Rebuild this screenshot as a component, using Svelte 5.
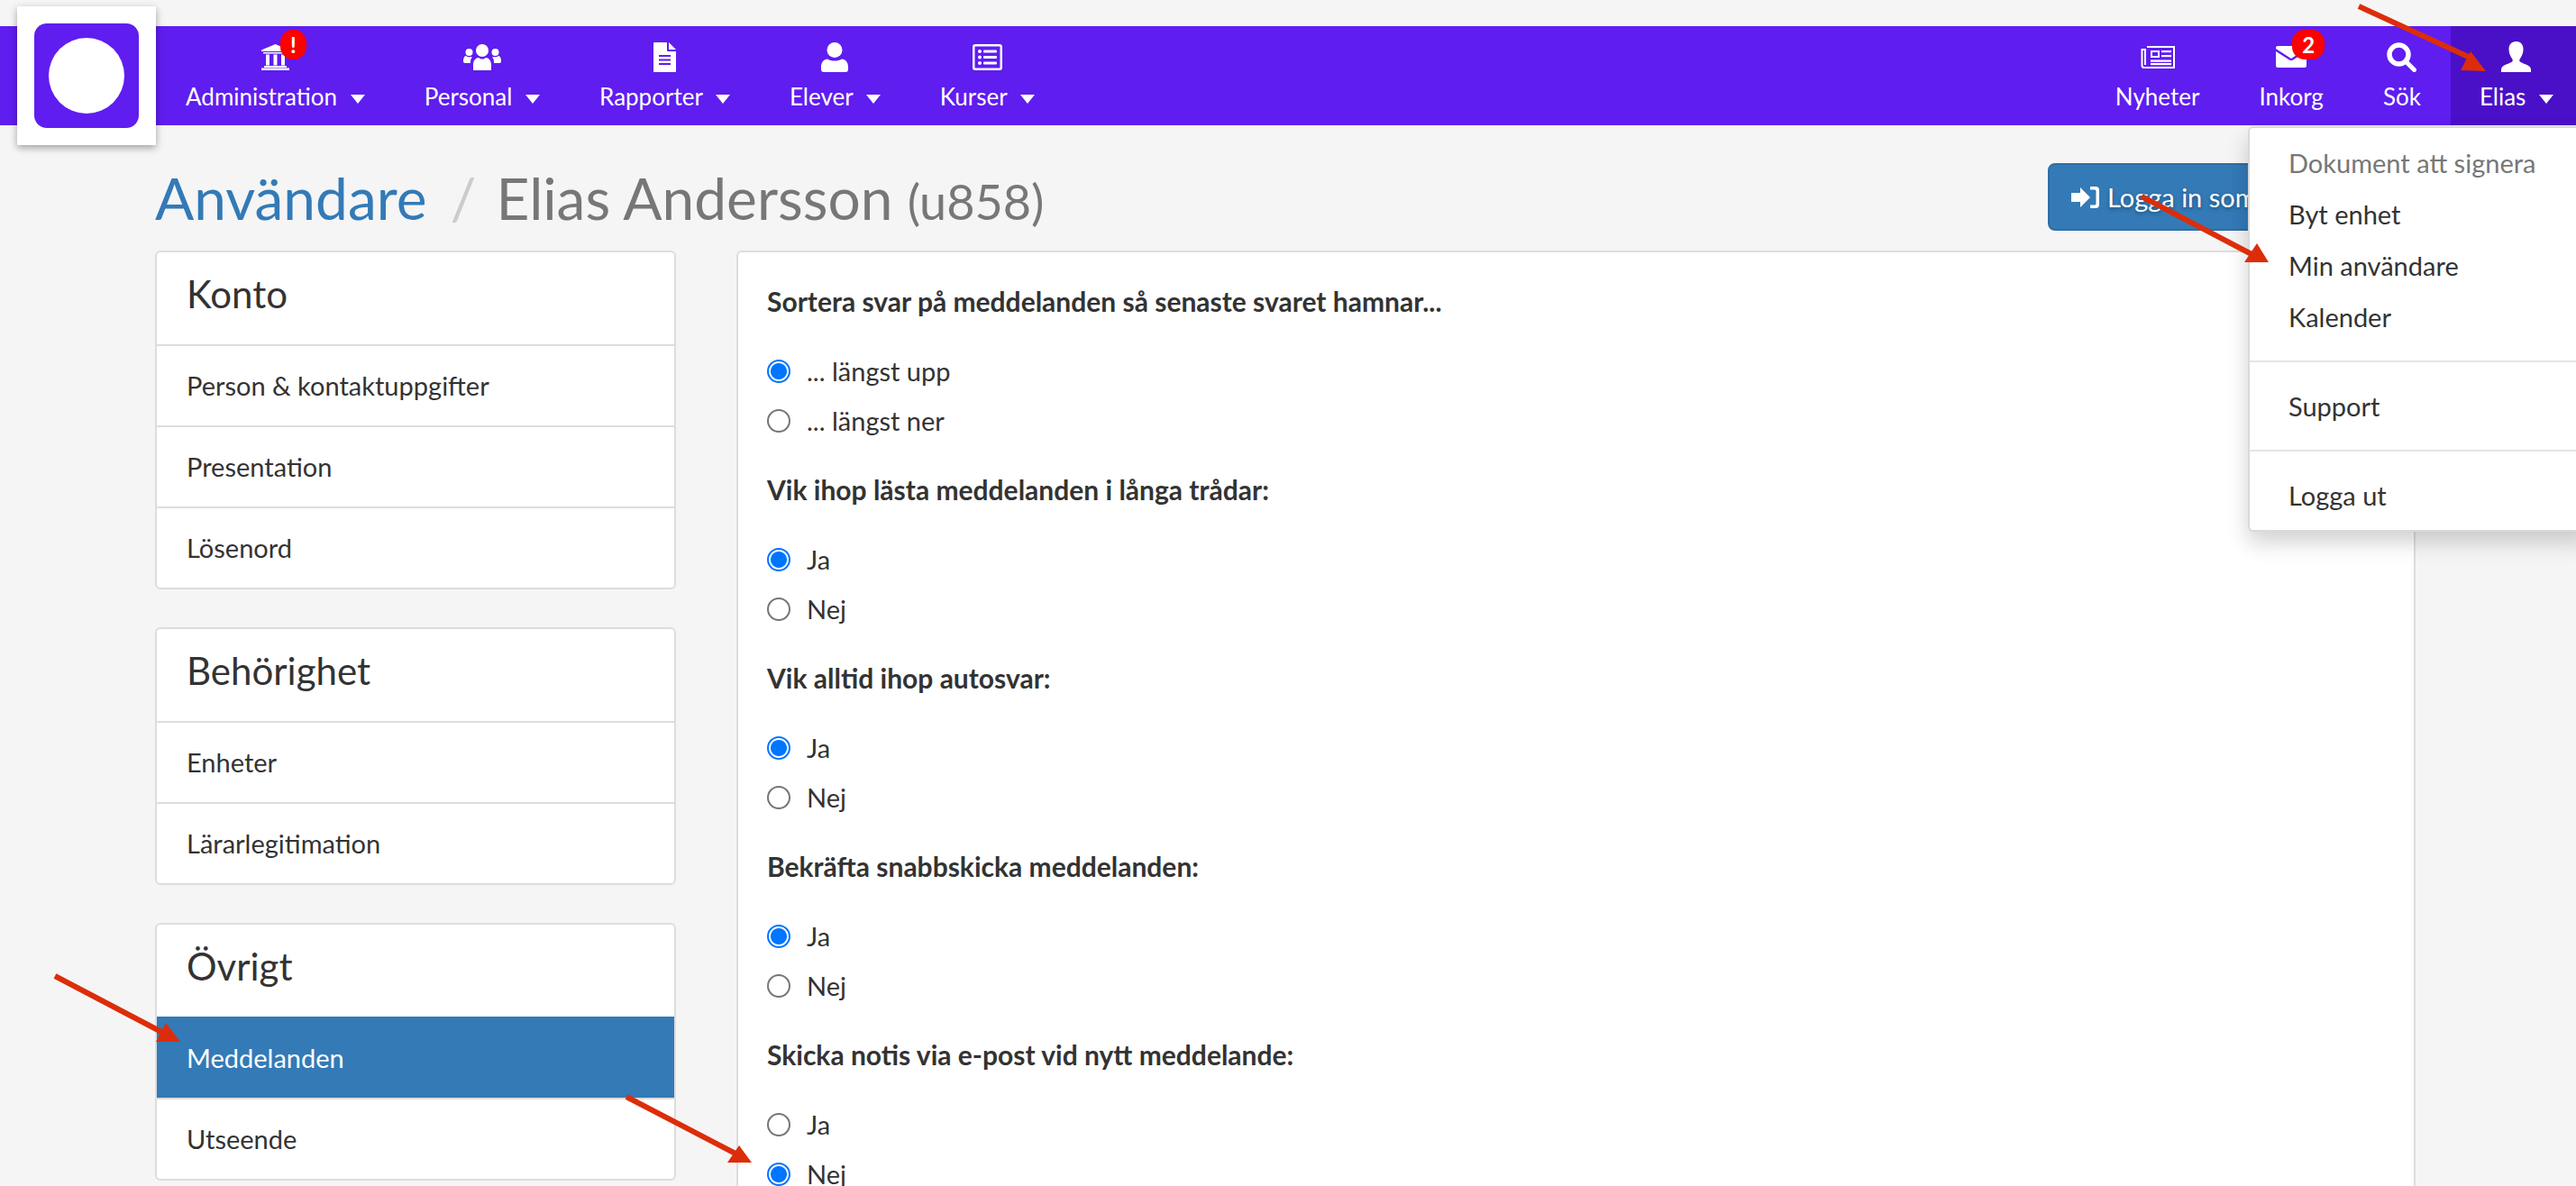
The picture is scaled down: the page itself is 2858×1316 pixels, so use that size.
<script>
	const leftNav = [
		{ label: 'Administration', icon: 'bank', badge: '!' },
		{ label: 'Personal', icon: 'users' },
		{ label: 'Rapporter', icon: 'file' },
		{ label: 'Elever', icon: 'user' },
		{ label: 'Kurser', icon: 'list' }
	];
	const rightNav = [
		{ label: 'Nyheter', icon: 'news' },
		{ label: 'Inkorg', icon: 'mail', badge: '2' },
		{ label: 'Sök', icon: 'search' }
	];
	const sideGroups = [
		{ title: 'Konto', items: ['Person & kontaktuppgifter', 'Presentation', 'Lösenord'] },
		{ title: 'Behörighet', items: ['Enheter', 'Lärarlegitimation'] },
		{ title: 'Övrigt', items: ['Meddelanden', 'Utseende'], active: 'Meddelanden' }
	];
	const questions = [
		{ label: 'Sortera svar på meddelanden så senaste svaret hamnar...', options: ['... längst upp', '... längst ner'], picked: 0 },
		{ label: 'Vik ihop lästa meddelanden i långa trådar:', options: ['Ja', 'Nej'], picked: 0 },
		{ label: 'Vik alltid ihop autosvar:', options: ['Ja', 'Nej'], picked: 0 },
		{ label: 'Bekräfta snabbskicka meddelanden:', options: ['Ja', 'Nej'], picked: 0 },
		{ label: 'Skicka notis via e-post vid nytt meddelande:', options: ['Ja', 'Nej'], picked: 1 }
	];
	const arrows = [
		{ line: '2617,7 2745,66', head: '2741,57 2730,78 2758,79' },
		{ line: '2376,218 2498,282', head: '2504,270 2490,291 2517,291' },
		{ line: '61,1083 181,1146', head: '184,1135 173,1156 200,1156' },
		{ line: '695,1217 816,1280', head: '820,1271 807,1290 834,1290' }
	];
</script>

{#snippet icon(name)}
	{#if name === 'bank'}
		<svg class="ico" width="31" height="29" viewBox="0 0 31 29" fill="#fff">
			<path d="M15.5 0 31 6.500V8H0V6.500Z" />
			<path d="M2 9h27v1.500H2zM5 11.500h4v12H5zM13.500 11.500h4v12h-4zM22 11.500h4v12h-4zM3 24h25v2H3zM0 26.500h31V29H0z" />
		</svg>
	{:else if name === 'users'}
		<svg class="ico" width="42" height="29" viewBox="0 0 42 29" fill="#fff">
			<circle cx="21" cy="7" r="7" />
			<circle cx="6.500" cy="9" r="4" />
			<circle cx="35.500" cy="9" r="4" />
			<path d="M11 29v-6c0-5 3-8 6-8 1.500 1 2.500 1.500 4 1.500s2.500-.5 4-1.500c3 0 6 3 6 8v6c0 0 0 0-1 0H12c-1 0-1 0-1 0Z" />
			<path d="M9.500 15c-1.500 1.500-1.500 4-1.500 6H2c-1 0-2-.5-2-2 0-3 1-6 3-6 1 .8 2 1.300 3.500 1.300 1.200 0 2-.3 3-.3ZM32.500 15c1.500 1.500 1.500 4 1.500 6h6c1 0 2-.5 2-2 0-3-1-6-3-6-1 .8-2 1.300-3.500 1.300-1.200 0-2-.3-3-.3Z" />
		</svg>
	{:else if name === 'file'}
		<svg class="ico" width="25" height="33" viewBox="0 0 25 33">
			<path fill="#fff" d="M1 0h14v9a1 1 0 0 0 1 1h9v22a1 1 0 0 1-1 1H1a1 1 0 0 1-1-1V1a1 1 0 0 1 1-1Z" />
			<path fill="#fff" d="M17 0l8 8h-8Z" />
			<path fill="none" stroke="#5f1df0" stroke-width="2" d="M6 15h13M6 19.500h13M6 24h13" />
		</svg>
	{:else if name === 'user'}
		<svg class="ico" width="30" height="33" viewBox="0 0 30 33" fill="#fff">
			<circle cx="15" cy="8.500" r="8.500" />
			<path d="M7 18.500c2.500 1.500 5 2 8 2s5.500-.5 8-2c4 0 7 4 7 8.500v3c0 2-1 3-3 3H3c-2 0-3-1-3-3v-3c0-4.500 3-8.500 7-8.500Z" />
		</svg>
	{:else if name === 'list'}
		<svg class="ico" width="33" height="29" viewBox="0 0 33 29">
			<rect x="1.250" y="1.250" width="30.500" height="26.500" rx="2" fill="none" stroke="#fff" stroke-width="2.500" />
			<g fill="#fff">
				<circle cx="8" cy="8" r="2" /><circle cx="8" cy="14.500" r="2" /><circle cx="8" cy="21" r="2" />
				<rect x="12" y="6.500" width="15" height="3" rx="1" /><rect x="12" y="13" width="15" height="3" rx="1" /><rect x="12" y="19.500" width="15" height="3" rx="1" />
			</g>
		</svg>
	{:else if name === 'news'}
		<svg class="ico" width="38" height="25" viewBox="0 0 38 25">
			<path fill="none" stroke="#fff" stroke-width="2" d="M7 1h30v23H4a2.500 2.500 0 0 1-2.500-2.500V4H5v17" />
			<g fill="#fff">
				<path d="M11 5h10v8H11Zm2 2v4h6V7Z" fill-rule="evenodd" />
				<rect x="23" y="5" width="11" height="2.200" /><rect x="23" y="10" width="11" height="2.200" />
				<rect x="11" y="15.500" width="23" height="2.200" /><rect x="11" y="19" width="23" height="2.200" />
			</g>
		</svg>
	{:else if name === 'mail'}
		<svg class="ico" width="34" height="24" viewBox="0 0 34 24" fill="#fff">
			<path d="M0 2a2 2 0 0 1 2-2h30a2 2 0 0 1 2 2v1L17 14 0 3Z" />
			<path d="M0 6l15 9.500c1.300.8 2.700.8 4 0L34 6v16a2 2 0 0 1-2 2H2a2 2 0 0 1-2-2Z" />
		</svg>
	{:else if name === 'search'}
		<svg class="ico" width="33" height="33" viewBox="0 0 33 33" fill="none" stroke="#fff">
			<circle cx="13.500" cy="13.500" r="10.500" stroke-width="5.500" />
			<path d="M21.500 21.500 30.500 30.500" stroke-width="5" stroke-linecap="round" />
		</svg>
	{:else if name === 'glyph'}
		<svg class="ico" width="33" height="34" viewBox="0 0 33 34" fill="#fff">
			<path d="M16.500 0c5 0 8 3.500 8 8.500 0 4-1.500 8-3.500 10.500-.8 1-1 2-.5 3 2 2.500 12.500 4 12.500 9V34H0v-3c0-5 10.500-6.500 12.500-9 .5-1 .3-2-.5-3C10 16.500 8.500 12.500 8.500 8.500c0-5 3-8.500 8-8.500Z" />
		</svg>
	{/if}
{/snippet}

<div class="page">
	<nav class="topbar">
		<div class="nav-group">
			{#each leftNav as item}
				<div class="nav-item">
					<span class="icon-wrap">
						{@render icon(item.icon)}
						{#if item.badge}<span class="badge">{item.badge}</span>{/if}
					</span>
					<span class="nav-label">{item.label} <i class="caret"></i></span>
				</div>
			{/each}
		</div>
		<div class="nav-group">
			{#each rightNav as item}
				<div class="nav-item">
					<span class="icon-wrap">
						{@render icon(item.icon)}
						{#if item.badge}<span class="badge wide">{item.badge}</span>{/if}
					</span>
					<span class="nav-label">{item.label}</span>
				</div>
			{/each}
			<div class="nav-item open">
				<span class="icon-wrap">{@render icon('glyph')}</span>
				<span class="nav-label">Elias <i class="caret"></i></span>
			</div>
		</div>
	</nav>

	<header class="title-row">
		<h1><a href="#users">Användare</a><span class="slash">/</span>Elias Andersson <small>(u858)</small></h1>
		<button class="login-as">
			<svg width="32" height="26" viewBox="0 0 32 26" fill="#fff">
				<path d="M0 8h10V2l11 11-11 11v-6H0Z" />
				<path d="M21 1h6a4 4 0 0 1 4 4v16a4 4 0 0 1-4 4h-6v-3.500h5a1.500 1.500 0 0 0 1.500-1.500V6a1.500 1.500 0 0 0-1.500-1.500h-5Z" />
			</svg>
			Logga in som
		</button>
	</header>

	<div class="columns">
		<aside class="sidebar">
			{#each sideGroups as group}
				<section class="side-panel">
					<h3>{group.title}</h3>
					{#each group.items as entry}
						<div class="side-item" class:active={entry === group.active}>{entry}</div>
					{/each}
				</section>
			{/each}
		</aside>

		<main class="form-panel">
			{#each questions as q}
				<div class="question">
					<div class="q-label">{q.label}</div>
					{#each q.options as opt, j}
						<label class="radio-row">
							<span class="radio" class:checked={q.picked === j}></span>
							{opt}
						</label>
					{/each}
				</div>
			{/each}
		</main>
	</div>

	<div class="logo">
		<div class="logo-mark"><span class="logo-dot"></span></div>
	</div>

	<ul class="user-menu">
		<li class="muted">Dokument att signera</li>
		<li>Byt enhet</li>
		<li>Min användare</li>
		<li>Kalender</li>
		<li class="divider"></li>
		<li>Support</li>
		<li class="divider"></li>
		<li>Logga ut</li>
	</ul>

	<svg class="arrows" width="2858" height="1316" viewBox="0 0 2858 1316">
		{#each arrows as a}
			<polyline points={a.line} fill="none" stroke="#dc2d0a" stroke-width="6" />
			<polygon points={a.head} fill="#dc2d0a" />
		{/each}
	</svg>
</div>

<style>
	:global(body) {
		margin: 0;
		background: #f5f5f5;
	}

	.page {
		position: relative;
		height: 1316px;
		overflow: hidden;
		padding-top: 29px;
		box-sizing: border-box;
		font-family: Lato, 'Noto Sans', sans-serif;
		font-size: 29px;
		color: #333;
		background: #f5f5f5;
	}

	.topbar {
		display: flex;
		justify-content: space-between;
		height: 110px;
		padding-left: 173px;
		background: #5f1df0;
		color: #fff;
		font-size: 26px;
	}

	.nav-group {
		display: flex;
	}

	.nav-item {
		display: flex;
		flex-direction: column;
		align-items: center;
		padding: 17px 33px 0;
	}

	.nav-item.open {
		background: #4a10c8;
		padding-left: 32px;
		padding-right: 25px;
	}

	.icon-wrap {
		position: relative;
		display: flex;
		align-items: center;
		height: 34px;
	}

	.ico {
		display: block;
	}

	.badge {
		position: absolute;
		top: -13px;
		right: -19px;
		width: 29px;
		height: 33px;
		border-radius: 14px;
		background: #f00;
		color: #fff;
		font-size: 24px;
		font-weight: 700;
		line-height: 33px;
		text-align: center;
	}

	.badge.wide {
		width: 36px;
		right: -20px;
	}

	.nav-label {
		margin-top: 8px;
		line-height: 38px;
		white-space: nowrap;
	}

	.caret {
		display: inline-block;
		margin-left: 8px;
		vertical-align: middle;
		border-top: 10px solid #fff;
		border-left: 8px solid transparent;
		border-right: 8px solid transparent;
	}

	.title-row {
		display: flex;
		justify-content: space-between;
		align-items: flex-start;
		height: 139px;
		padding-left: 172px;
		box-sizing: border-box;
		padding-top: 42px;
	}

	h1 {
		margin: 0;
		font-size: 64px;
		line-height: 78px;
		font-weight: 400;
		color: #777;
		white-space: nowrap;
	}

	h1 a {
		color: #337ab7;
		text-decoration: none;
	}

	.slash {
		margin: 0 22px 0 26px;
		color: #ccc;
	}

	h1 small {
		font-size: 54px;
		font-weight: 400;
	}

	.login-as {
		display: flex;
		align-items: center;
		gap: 8px;
		width: 400px;
		height: 75px;
		margin-right: 186px;
		padding: 0 24px;
		border: 2px solid #2e6da4;
		border-radius: 8px;
		background: #337ab7;
		color: #fff;
		font: inherit;
		font-size: 29px;
		text-shadow: 0 2px 4px rgba(0, 0, 0, 0.35);
		white-space: nowrap;
	}

	.columns {
		display: flex;
		gap: 67px;
		padding-left: 172px;
		width: 2680px;
		box-sizing: border-box;
	}

	.sidebar {
		display: flex;
		flex-direction: column;
		gap: 42px;
		width: 578px;
		flex-shrink: 0;
	}

	.side-panel {
		border: 2px solid #ddd;
		border-radius: 6px;
		background: #fff;
		overflow: hidden;
	}

	h3 {
		margin: 0;
		height: 102px;
		padding-left: 33px;
		font-size: 42px;
		font-weight: 400;
		line-height: 93px;
		box-sizing: border-box;
	}

	.side-item {
		height: 90px;
		padding-left: 33px;
		border-top: 2px solid #ddd;
		box-sizing: border-box;
		line-height: 88px;
	}

	.side-item.active {
		background: #337ab7;
		border-top-color: #337ab7;
		color: #fff;
	}

	.form-panel {
		flex: 1;
		height: 1100px;
		padding: 29px 32px 0;
		border: 2px solid #ddd;
		border-radius: 6px;
		background: #fff;
	}

	.question {
		height: 209px;
	}

	.q-label {
		height: 79px;
		font-size: 30px;
		line-height: 50px;
		font-weight: 700;
	}

	.radio-row {
		display: flex;
		align-items: center;
		gap: 18px;
		height: 55px;
		margin-top: -4px;
		margin-bottom: 4px;
	}

	.radio {
		flex-shrink: 0;
		width: 26px;
		height: 26px;
		border: 2px solid #767676;
		border-radius: 50%;
		box-sizing: border-box;
		background: #fff;
	}

	.radio.checked {
		border-color: #0075ff;
		background: radial-gradient(circle, #0075ff 0 8.500px, #fff 9.500px);
	}

	.logo {
		position: absolute;
		left: 19px;
		top: 7px;
		display: flex;
		align-items: center;
		justify-content: center;
		width: 154px;
		height: 154px;
		background: #fff;
		box-shadow: 0 3px 8px rgba(0, 0, 0, 0.35);
	}

	.logo-mark {
		display: flex;
		align-items: center;
		justify-content: center;
		width: 116px;
		height: 116px;
		border-radius: 14px;
		background: #5f1df0;
	}

	.logo-dot {
		width: 84px;
		height: 84px;
		border-radius: 50%;
		background: #fff;
	}

	.user-menu {
		position: absolute;
		top: 140px;
		left: 2494px;
		width: 380px;
		margin: 0;
		padding: 10px 0;
		box-sizing: border-box;
		list-style: none;
		background: #fff;
		border: 2px solid rgba(0, 0, 0, 0.15);
		border-radius: 6px;
		box-shadow: 0 12px 24px rgba(0, 0, 0, 0.18);
	}

	.user-menu li {
		height: 57px;
		padding-left: 43px;
		line-height: 57px;
		white-space: nowrap;
	}

	.user-menu li.muted {
		color: #777;
	}

	.user-menu li.divider {
		height: 2px;
		margin: 20px 0;
		padding: 0;
		background: #e5e5e5;
	}

	.arrows {
		position: absolute;
		left: 0;
		top: 0;
		pointer-events: none;
	}
</style>
